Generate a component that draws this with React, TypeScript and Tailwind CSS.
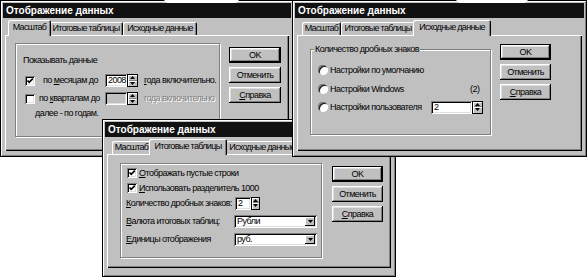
import React from 'react';

const Up = () => (
  <svg width="5" height="3" viewBox="0 0 5 3"><path d="M2.5 0 L5 3 L0 3 Z" fill="#000" /></svg>
);
const Down = () => (
  <svg width="5" height="3" viewBox="0 0 5 3"><path d="M0 0 L5 0 L2.5 3 Z" fill="#000" /></svg>
);

function Check({ checked }: { checked?: boolean }) {
  return (
    <div className="relative w-[10px] h-[10px] shrink-0 bg-white shadow-[inset_1px_1px_0_#808080,inset_-1px_-1px_0_#fff,inset_2px_2px_0_#000,inset_-2px_-2px_0_#dfdfdf]">
      {checked && (
        <svg className="absolute left-0 top-0" width="10" height="10" viewBox="0 0 10 10">
          <path d="M2.5 4.5 L4.2 6.4 L7.8 2.6" stroke="#000" strokeWidth="1.6" fill="none" />
        </svg>
      )}
    </div>
  );
}

function Radio() {
  return (
    <div className="w-[10px] h-[10px] shrink-0 rounded-full bg-white shadow-[inset_1px_1px_0_#808080,inset_-1px_-1px_0_#fff,inset_2px_2px_0_#202020]" />
  );
}

function Spin({ value, field, btn, disabled }: { value?: string; field: string; btn: string; disabled?: boolean }) {
  return (
    <div className="flex h-[13px] shrink-0">
      <div
        className={`${field} h-full flex items-center pl-[3px] shadow-[inset_1px_1px_0_#808080,inset_-1px_-1px_0_#fff,inset_2px_2px_0_#000,inset_-2px_-2px_0_#dfdfdf] ${
          disabled ? 'bg-[#c0c0c0]' : 'bg-white'
        }`}
      >
        {value}
      </div>
      <div className={`${btn} h-full flex flex-col border border-black bg-[#c0c0c0]`}>
        <div className="flex-1 flex items-center justify-center shadow-[inset_1px_1px_0_#fff,inset_0_-1px_0_#808080]">
          <Up />
        </div>
        <div className="flex-1 flex items-center justify-center shadow-[inset_1px_1px_0_#fff]">
          <Down />
        </div>
      </div>
    </div>
  );
}

function Combo({ value, h }: { value: string; h: string }) {
  return (
    <div className={`w-[83px] ${h} shrink-0 bg-white flex items-center pl-[3px] pr-[2px] shadow-[inset_1px_1px_0_#808080,inset_-1px_-1px_0_#fff,inset_2px_2px_0_#000,inset_-2px_-2px_0_#dfdfdf]`}>
      <span className="flex-1">{value}</span>
      <div className="w-[10px] h-[9px] bg-[#c0c0c0] flex items-center justify-center shadow-[inset_-1px_-1px_0_#000,inset_1px_1px_0_#fff]">
        <Down />
      </div>
    </div>
  );
}

function Btn({ children, def, w }: { children: React.ReactNode; def?: boolean; w: string }) {
  const face =
    'h-full w-full flex items-center justify-center bg-[#c0c0c0] shadow-[inset_-1px_-1px_0_#000,inset_1px_1px_0_#fff,inset_-2px_-2px_0_#808080,inset_2px_2px_0_#dfdfdf]';
  return def ? (
    <div className={`${w} h-[16px] border border-black`}>
      <div className={face}>{children}</div>
    </div>
  ) : (
    <div className={`${w} h-[16px]`}>
      <div className={face}>{children}</div>
    </div>
  );
}

function Buttons({ className, w }: { className: string; w: string }) {
  return (
    <div className={`flex flex-col gap-[4px] ${className}`}>
      <Btn def w={w}>OK</Btn>
      <Btn w={w}>Отменить</Btn>
      <Btn w={w}>
        <span><u>С</u>правка</span>
      </Btn>
    </div>
  );
}

function Tabs({ active }: { active: number }) {
  const tabs = [
    { label: 'Масштаб', w: 'w-[39px]', wa: 'w-[43px]' },
    { label: 'Итоговые таблицы', w: 'w-[74px]', wa: 'w-[78px]' },
    { label: 'Исходные данные', w: 'w-[74px]', wa: 'w-[78px]' },
  ];
  return (
    <div className="mt-[2px] h-[15px] pl-[7px] flex items-end tracking-[-0.7px]">
      {tabs.map((t, i) =>
        i === active ? (
          <div
            key={t.label}
            className={`relative z-10 -mx-[2px] -mb-px h-[16px] ${t.wa} shrink-0 bg-[#c0c0c0] rounded-t-[2px] flex items-center justify-center pb-[1px] shadow-[inset_1px_1px_0_#fff,inset_-1px_0_0_#000,inset_-2px_0_0_#808080]`}
          >
            {t.label}
          </div>
        ) : (
          <div
            key={t.label}
            className={`h-[13px] ${t.w} shrink-0 bg-[#c0c0c0] rounded-t-[2px] flex items-center justify-center shadow-[inset_1px_1px_0_#fff,inset_-1px_0_0_#000,inset_-2px_0_0_#808080]`}
          >
            {t.label}
          </div>
        )
      )}
    </div>
  );
}

function Win({ className, active, panelMb, children }: { className: string; active: number; panelMb: string; children: React.ReactNode }) {
  return (
    <div className={`absolute ${className} flex flex-col p-[2px] bg-[#c0c0c0] border border-black shadow-[inset_1px_1px_0_#fff,inset_-1px_-1px_0_#808080]`}>
      <div className="h-[15px] shrink-0 bg-[#111] text-white text-[10px] font-bold tracking-normal pl-[3px] flex items-center">
        Отображение данных
      </div>
      <Tabs active={active} />
      <div className={`flex-1 mx-[2px] ${panelMb} flex items-start shadow-[inset_1px_1px_0_#fff,inset_-1px_-1px_0_#000,inset_-2px_-2px_0_#808080]`}>
        {children}
      </div>
    </div>
  );
}

const etched = 'border border-[#808080] shadow-[inset_1px_1px_0_#fff,1px_1px_0_#fff]';
const dis = 'text-[#808080] [text-shadow:1px_1px_0_#fff]';

export default function App() {
  return (
    <div className="relative w-[588px] h-[277px] overflow-hidden whitespace-nowrap bg-white text-black text-[9px] leading-[11px] tracking-[-0.55px] [font-family:'Liberation_Sans',Arial,sans-serif]">
      {/* Масштаб */}
      <Win className="left-0 top-0 w-[294px] h-[157px]" active={0} panelMb="mb-[3px]">
        <div className={`ml-[10px] mt-[8px] w-[205px] h-[94px] shrink-0 flex flex-col ${etched}`}>
          <div className="mt-[10px] ml-[7px] h-[12px] flex items-center">Показывать данные</div>
          <div className="mt-[8px] ml-[9px] h-[13px] flex items-center">
            <Check checked />
            <span className="ml-[8px] w-[62px] shrink-0">
              по <u>м</u>есяцам до
            </span>
            <Spin value="2008" field="w-[22px]" btn="w-[11px]" />
            <span className="ml-[6px]">
              <u>г</u>ода включительно.
            </span>
          </div>
          <div className="mt-[5px] ml-[9px] h-[13px] flex items-center">
            <Check />
            <span className="ml-[4px] w-[66px] shrink-0">
              по <u>к</u>варталам до
            </span>
            <Spin field="w-[22px]" btn="w-[11px]" disabled />
            <span className={`ml-[6px] ${dis}`}>года включительно</span>
          </div>
          <div className="mt-[2px] ml-[19px] h-[12px] flex items-center">далее - по годам.</div>
        </div>
        <Buttons className="ml-[9px] mt-[12px]" w="w-[52px]" />
      </Win>

      {/* Итоговые таблицы */}
      <Win className="left-[102px] top-[119px] w-[294px] h-[158px]" active={1} panelMb="mb-[6px]">
        <div className={`ml-[13px] mt-[9px] w-[202px] h-[95px] shrink-0 flex flex-col ${etched}`}>
          <div className="mt-[3px] ml-[6px] h-[12px] flex items-center">
            <Check checked />
            <span className="ml-[2px]">
              <u>О</u>тображать пустые строки
            </span>
          </div>
          <div className="mt-[3px] ml-[6px] h-[12px] flex items-center">
            <Check checked />
            <span className="ml-[2px]">
              <u>И</u>спользовать разделитель 1000
            </span>
          </div>
          <div className="mt-[3px] ml-[5px] h-[12px] flex items-center">
            <span className="w-[109px] shrink-0">
              <u>К</u>оличество дробных знаков:
            </span>
            <Spin value="2" field="w-[16px]" btn="w-[9px]" />
          </div>
          <div className="mt-[6px] ml-[5px] h-[13px] flex items-center">
            <span className="w-[108px] shrink-0">
              <u>В</u>алюта итоговых таблиц:
            </span>
            <Combo value="Рубли" h="h-[13px]" />
          </div>
          <div className="mt-[5px] ml-[5px] h-[13px] flex items-center">
            <span className="w-[108px] shrink-0">
              <u>Е</u>диницы отображения
            </span>
            <Combo value="руб." h="h-[13px]" />
          </div>
        </div>
        <Buttons className="ml-[10px] mt-[12px]" w="w-[51px]" />
      </Win>

      {/* Исходные данные */}
      <Win className="left-[292px] top-0 w-[295px] h-[157px]" active={2} panelMb="mb-[3px]">
        <div className={`relative ml-[13px] mt-[14px] w-[181px] h-[86px] shrink-0 flex flex-col ${etched}`}>
          <span className="absolute left-[3px] -top-[6px] px-[1px] bg-[#c0c0c0]">Количество дробных знаков</span>
          <div className="mt-[14px] ml-[7px] h-[12px] flex items-center">
            <Radio />
            <span className="ml-[2px]">Настройки по умолчанию</span>
          </div>
          <div className="mt-[7px] ml-[7px] h-[12px] flex items-center">
            <Radio />
            <span className="ml-[2px] w-[138px] shrink-0">Настройки Windows</span>
            <span className="ml-[2px]">(2)</span>
          </div>
          <div className="mt-[6px] ml-[7px] h-[12px] flex items-center">
            <Radio />
            <span className="ml-[2px] w-[101px] shrink-0">Настройки пользователя</span>
            <Spin value="2" field="w-[41px]" btn="w-[11px]" />
          </div>
        </div>
        <Buttons className="ml-[9px] mt-[9px]" w="w-[51px]" />
      </Win>

      {/* scan artefacts at the top edge */}
      <div className="absolute left-[164px] -top-[6px] w-[75px] h-[9px] rounded-full bg-white" />
      <div className="absolute left-[456px] -top-[6px] w-[72px] h-[9px] rounded-full bg-white" />
    </div>
  );
}
